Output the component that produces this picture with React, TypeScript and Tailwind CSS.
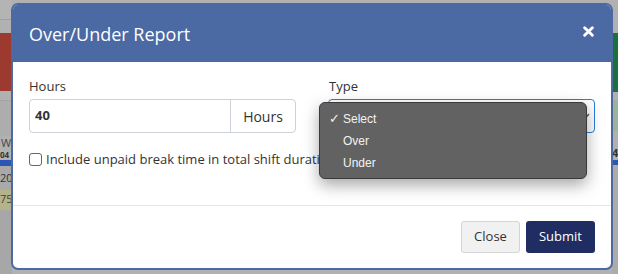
import React from "react";

export default function App() {
  return (
    <div className="relative h-[274px] w-[618px] overflow-hidden bg-[#b1b1b1]" style={{ fontFamily: '"Open Sans", sans-serif' }}>
      {/* dimmed background page */}
      <div className="flex h-full w-full">
        <div className="flex w-[12px] flex-col overflow-hidden">
          <div className="h-[20px] border-b border-[#a0a0a0] bg-[#b4b4b4]" />
          <div className="h-[13px] bg-[#b1b1b1]" />
          <div className="h-[58px] bg-[#9c3a2f]" />
          <div className="h-[9px] bg-[#b1b1b1]" />
          <div className="h-[36px] border-t border-[#a3a3a3] bg-[#adadad]" />
          <div className="flex h-[24px] flex-col bg-[#b1b1b1] text-[#444]">
            <span className="h-[13px] pl-[1px] text-[11px] leading-[13px]">W</span>
            <span className="h-[11px] text-[8px] font-bold leading-[11px] text-[#333]">04</span>
          </div>
          <div className="h-[6px] bg-[#2b56b5]" />
          <div className="h-[24px] bg-[#a9a9a9] pt-[5px] text-[11px] leading-[14px] text-[#333]">20</div>
          <div className="h-[20px] bg-[#b4b38a] text-[11px] leading-[18px] text-[#444]">75</div>
          <div className="flex-1 bg-[#a7a7a7]" />
        </div>
        <div className="flex-1" />
        <div className="flex w-[6px] flex-col overflow-hidden">
          <div className="h-[33px] bg-[#b1b1b1]" />
          <div className="h-[59px] bg-[#1d6f3d]" />
          <div className="h-[8px] bg-[#b1b1b1]" />
          <div className="h-[31px] bg-[#9fb39c]" />
          <div className="h-[6px] bg-[#b1b1b1]" />
          <div className="flex h-[23px] items-end bg-[#b1b1b1] text-[11px] font-bold leading-[14px] text-[#333]">4</div>
          <div className="h-[5px] bg-[#2b56b5]" />
          <div className="flex-1 bg-[#acacac]" />
        </div>
      </div>

      {/* modal */}
      <div className="absolute left-[11px] top-[3px] flex h-[267px] w-[602px] flex-col overflow-hidden rounded-[7px] border-[2px] border-[#4b69a3] bg-white">
        <div className="flex h-[57px] items-center justify-between bg-[#4b69a3] pl-[16px] pr-[17px]">
          <span className="text-[18px] leading-none text-white">Over/Under Report</span>
          <svg width="11" height="11" viewBox="0 0 10 10" className="mt-[-4px]">
            <path d="M1.5 1.5 L8.5 8.5 M8.5 1.5 L1.5 8.5" stroke="white" strokeWidth="2.6" strokeLinecap="round" />
          </svg>
        </div>
        <div className="flex flex-col px-[16px] pt-[15px]">
          <div className="flex gap-[32px]">
            <div className="flex w-[267px] flex-col">
              <span className="text-[13px] leading-[18px] text-[#333]">Hours</span>
              <div className="mt-[4px] flex h-[34px] rounded-[4px] border border-[#cdd2d8]">
                <div className="flex flex-1 items-center pl-[5px] text-[13px] font-bold text-[#333]">40</div>
                <div className="flex w-[65px] items-center justify-center border-l border-[#cdd2d8] text-[14px] text-[#333]">Hours</div>
              </div>
            </div>
            <div className="flex w-[267px] flex-col">
              <span className="pl-[1px] text-[13px] leading-[18px] text-[#333]">Type</span>
              <div className="mt-[4px] flex h-[34px] items-center justify-end rounded-[4px] border border-[#2c7be0] pr-[4px]">
                <svg width="8" height="6" viewBox="0 0 8 6"><path d="M1 1 L4 4.5 L7 1" fill="none" stroke="#555" strokeWidth="1.3" /></svg>
              </div>
            </div>
          </div>
          <label className="mt-[17px] flex items-center gap-[4px] text-[13px] text-[#333]">
            <span className="h-[13px] w-[13px] rounded-[3px] border border-[#666] bg-white" />
            <span className="whitespace-nowrap">Include unpaid break time in total shift duration</span>
          </label>
        </div>
        <div className="mt-[35px] border-t border-[#e6e6e6]" />
        <div className="flex justify-end gap-[6px] pr-[16px] pt-[15px]">
          <button className="h-[32px] w-[59px] rounded-[3px] border border-[#d4d4d4] bg-[#f1f1f1] text-[13px] text-[#333]">Close</button>
          <button className="h-[32px] w-[69px] rounded-[3px] bg-[#202d63] text-[13px] text-white">Submit</button>
        </div>
      </div>

      {/* native select dropdown */}
      <div
        className="absolute left-[319px] top-[102px] flex h-[77px] w-[268px] flex-col rounded-[6px] border border-[#3a3a3a] bg-[#626262] pt-[5px] text-[12px] text-[#f2f2f2] shadow-[0_6px_16px_rgba(0,0,0,0.35)]"
        style={{ fontFamily: '"Liberation Sans", Arial, sans-serif' }}
      >
        <div className="flex h-[22px] items-center">
          <span className="w-[23px] pl-[9px] text-[13px]">✓</span>
          <span>Select</span>
        </div>
        <div className="flex h-[22px] items-center pl-[23px]">Over</div>
        <div className="flex h-[22px] items-center pl-[23px]">Under</div>
      </div>
    </div>
  );
}
